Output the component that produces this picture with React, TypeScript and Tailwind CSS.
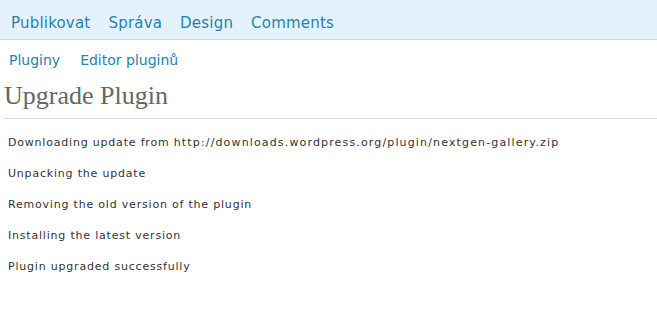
export default function App() {
  const lines = [
    "Unpacking the update",
    "Removing the old version of the plugin",
    "Installing the latest version",
    "Plugin upgraded successfully",
  ];
  return (
    <div className="w-[657px] h-[326px] bg-white overflow-hidden" style={{ fontFamily: '"DejaVu Sans", sans-serif' }}>
      <div className="h-[40px] bg-[#e4f2fd] border-b border-[#c6d9e9] flex items-center pl-[11px] gap-[18px] text-[15px] tracking-[0.2px] text-[#2583ad] pt-[7px]">
        <span>Publikovat</span>
        <span>Správa</span>
        <span>Design</span>
        <span>Comments</span>
      </div>
      <div className="flex gap-[20px] pl-[9px] pt-[11px] text-[14px] text-[#2583ad] leading-[18px]">
        <span>Pluginy</span>
        <span>Editor pluginů</span>
      </div>
      <div className="ml-[4px] mt-[12px] pb-[7px] border-b border-[#dadada] text-[26px] text-[#666] leading-[30px]" style={{ fontFamily: '"Liberation Serif", serif' }}>
        Upgrade Plugin
      </div>
      <div className="pl-[8px] pt-[16px] text-[11px] tracking-[0.8px] text-[#333] flex flex-col gap-[16px]">
        <p className="leading-[15px]">
          Downloading update from{" "}
          <span className="tracking-[1.15px]">http://downloads.wordpress.org/plugin/nextgen-gallery.zip</span>
        </p>
        {lines.map((l) => (
          <p key={l} className="leading-[15px]">{l}</p>
        ))}
      </div>
    </div>
  );
}
